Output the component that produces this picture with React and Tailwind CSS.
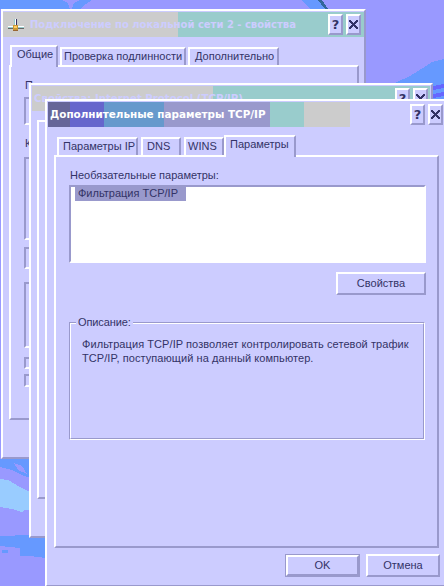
import React from 'react';

const Wallpaper = () => (
  <svg className="absolute inset-0" width="444" height="586" shapeRendering="crispEdges">
    <polygon points="0,0 62,0 68,3 70,9 0,9" fill="#6699ff" />
    <polygon points="74,3 80,0 92,0 86,4 80,9 72,9" fill="#6699ff" />
    <polygon points="302,0 318,0 328,9 310,9" fill="#6699ff" />
    <polygon points="318,0 322,0 328,9 325,9" fill="#336699" />
    <polygon points="395,83 410,76 426,66 432,62 444,59 444,83" fill="#6699ff" />
    <polygon points="433,83 444,80 444,99 433,99" fill="#6699ff" />
    <polygon points="433,86 444,84 444,88 433,90" fill="#6666ff" />
    <polygon points="433,94 444,92 444,96 433,98" fill="#6666ff" />
    <polygon points="0,459 30,459 30,478 24,476 12,470 0,467" fill="#6699ff" />
    <polygon points="14,463 22,466 27,474 18,470" fill="#9999ff" />
    <polygon points="0,479 8,480 20,487 30,492 30,510 24,510 22,512 12,509 0,507" fill="#99ccff" />
    <polygon points="0,536 30,535 46,538 46,558 30,556 20,556 20,548 0,546" fill="#6699ff" />
    <polygon points="2,550 8,550 8,553 2,553" fill="#6699ff" />
  </svg>
);

const NetIcon = () => (
  <svg width="16" height="12" viewBox="0 0 16 12" shapeRendering="crispEdges" className="shrink-0">
    <rect x="6" y="0" width="3" height="7" fill="#99cccc" />
    <rect x="7" y="0" width="1" height="7" fill="#ffffff" />
    <rect x="8" y="0" width="1" height="7" fill="#333366" />
    <rect x="0" y="7" width="16" height="3" fill="#99cccc" />
    <rect x="0" y="7" width="16" height="1" fill="#ffffff" />
    <rect x="0" y="9" width="16" height="1" fill="#666666" />
    <rect x="5" y="6" width="5" height="6" fill="#cc9933" />
    <rect x="6" y="7" width="3" height="2" fill="#ffcc66" />
    <rect x="5" y="11" width="5" height="1" fill="#996633" />
  </svg>
);

const Raised = ({ className = '', children }) => (
  <div className={`flex items-center justify-center border-2 border-t-white border-l-white border-r-[#9999cc] border-b-[#9999cc] bg-[#ccccff] text-[#333366] ${className}`}>
    {children}
  </div>
);

const TitleButtons = () => (
  <div className="ml-auto flex gap-[3px]">
    <Raised className="h-[21px] w-[15px] font-['DejaVu_Sans'] text-[13px] font-bold">?</Raised>
    <Raised className="h-[21px] w-[15px]">
      <svg width="9" height="9" viewBox="0 0 9 9" stroke="#333366" strokeWidth="2" shapeRendering="crispEdges">
        <path d="M0 0 9 9M9 0 0 9" />
      </svg>
    </Raised>
  </div>
);

const Tab = ({ active, className = '', children }) => (
  <div className={`border-2 border-b-0 border-t-white border-l-white border-r-[#9999cc] whitespace-nowrap ${active ? 'relative z-10 -mb-[2px] h-[22px] bg-[#ccccff] pt-[1px]' : 'mt-[2px] h-[18px] pt-px'} ${className}`}>
    {children}
  </div>
);

const Win = ({ className = '', children }) => (
  <div className={`absolute border-2 border-t-white border-l-white border-r-[#9999cc] border-b-[#9999cc] bg-[#ccccff] ${className}`}>
    {children}
  </div>
);

const Panel = ({ className = '', children }) => (
  <div className={`border-2 border-t-white border-l-white border-r-[#9999cc] border-b-[#9999cc] ${className}`}>
    {children}
  </div>
);

const Outline = ({ className = '' }) => (
  <div className={`border-2 border-t-[#9999cc] border-l-[#9999cc] border-r-white border-b-white ${className}`} />
);

const App = () => {
  return (
    <div className="relative h-[586px] w-[444px] overflow-hidden bg-[#9999ff] font-['Liberation_Sans'] text-[11px] leading-[13px] text-[#333366]">
      <Wallpaper />

      {/* back window */}
      <Win className="left-[1px] top-[9px] h-[450px] w-[365px] pt-px">
        <div className="flex h-[25px] items-center gap-[6px] bg-[linear-gradient(90deg,#cccccc_175px,#99cccc_175px)] pl-[5px] pr-[3px] font-['DejaVu_Sans'] text-[10px] font-bold text-[#ccccff]">
          <NetIcon />
          <span className="whitespace-nowrap">Подключение по локальной сети 2 - свойства</span>
          <TitleButtons />
        </div>
        <div className="mt-[8px] flex pl-[7px]">
          <Tab active className="w-[48px] pl-[5px]">Общие</Tab>
          <Tab className="ml-[2px] w-[126px] pl-[2px]">Проверка подлинности</Tab>
          <Tab className="ml-[2px] w-[91px] pl-[5px]">Дополнительно</Tab>
        </div>
        <Panel className="ml-[6px] h-[355px] w-[350px] px-[13px] pt-[12px]">
          <div className="pl-px">П</div>
          <Outline className="mt-[5px] h-[28px]" />
          <div className="mt-[12px] pl-px">К</div>
          <Outline className="mt-[7px] h-[83px]" />
          <Outline className="mt-[7px] h-[22px]" />
          <Outline className="mt-[13px] h-[66px]" />
          <Outline className="mt-[9px] h-[12px] w-[12px]" />
          <Outline className="mt-[5px] h-[13px] w-[13px]" />
        </Panel>
      </Win>

      {/* middle window */}
      <Win className="left-[29px] top-[83px] h-[455px] w-[404px] p-px">
        <div className="flex h-[25px] items-center bg-[linear-gradient(90deg,#cccccc_181px,#99cccc_181px)] pl-[2px] pr-[2px] font-['DejaVu_Sans'] text-[10.2px] font-bold text-[#ccccff]">
          <span className="whitespace-nowrap">Свойства: Internet Protocol (TCP/IP)</span>
          <TitleButtons />
        </div>
        <Panel className="ml-[5px] mt-[9px] h-[379px] w-[380px]" />
      </Win>

      {/* front window */}
      <Win className="left-[45px] top-[99px] h-[488px] w-[402px] p-px">
        <div className="flex h-[25px] items-center bg-[linear-gradient(90deg,#666699_22px,#6666cc_22px,#6666cc_56px,#6699cc_56px,#6699cc_116px,#9999cc_116px,#9999cc_222px,#99cccc_222px,#99cccc_256px,#cccccc_256px,#cccccc_302px,transparent_302px)] pl-[2px] pr-[1px] font-['DejaVu_Sans'] text-[10.4px] font-bold text-white">
          <span className="whitespace-nowrap">Дополнительные параметры TCP/IP</span>
          <TitleButtons />
        </div>

        <div className="mt-[8px] flex pl-[9px]">
          <Tab className="w-[81px] pl-[4px]">Параметры IP</Tab>
          <Tab className="ml-[3px] w-[40px] pl-[4px]">DNS</Tab>
          <Tab className="ml-[3px] w-[40px] pl-[2px]">WINS</Tab>
          <Tab active className="w-[72px] pl-[4px]">Параметры</Tab>
        </div>

        <Panel className="ml-[6px] flex h-[393px] w-[385px] flex-col pl-[13px] pr-[11px] pt-[12px]">
          <div className="pl-px">Необязательные параметры:</div>
          <div className="mt-[3px] h-[78px] w-[357px] border-2 border-t-[#9999cc] border-l-[#9999cc] border-r-white border-b-white bg-white pl-[4px]">
            <div className="h-[14px] w-[111px] bg-[#9999cc] pl-[3px]">Фильтрация TCP/IP</div>
          </div>
          <Raised className="ml-auto mt-[9px] h-[23px] w-[90px]">Свойства</Raised>

          {/* etched group box */}
          <div className="relative mt-[27px] h-[118px] w-[356px] border border-t-[#9999cc] border-l-[#9999cc] border-r-white border-b-white">
            <div className="h-full border border-t-white border-l-white border-r-[#9999cc] border-b-[#9999cc] px-[11px] pt-[13px] leading-[14px]">
              <p className="whitespace-pre-line tracking-[0.07px]">
                {'Фильтрация TCP/IP позволяет контролировать сетевой трафик\nTCP/IP,  поступающий на данный компьютер.'}
              </p>
            </div>
            <span className="absolute -top-[7px] left-[6px] bg-[#ccccff] px-[2px] tracking-[-0.1px]">Описание:</span>
          </div>
        </Panel>

        <div className="mt-[6px] flex items-center justify-end gap-[7px] pr-[4px]">
          <Raised className="h-[21px] w-[73px] outline-1 outline-[#9999cc]">OK</Raised>
          <Raised className="h-[23px] w-[74px]">Отмена</Raised>
        </div>
      </Win>
    </div>
  );
};

export default App;
